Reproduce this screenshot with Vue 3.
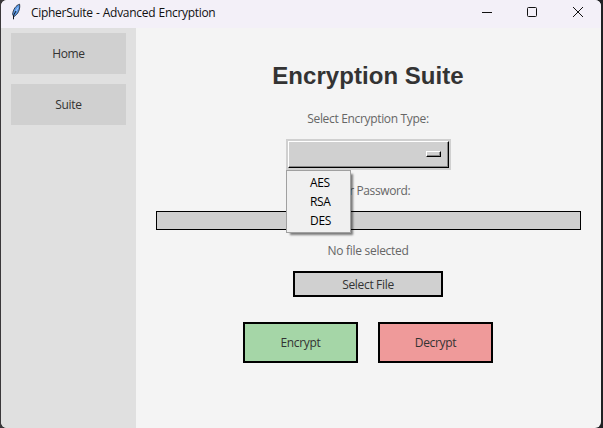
<script setup>
const pages = ['Home', 'Suite']
const ciphers = ['AES', 'RSA', 'DES']
</script>

<template>
  <div class="desktop">
    <div class="window">
      <header class="titlebar">
        <svg class="feather" width="10" height="18" viewBox="0 0 10 18">
          <path d="M8.600 1.200C5 2.200 2 6.500 1.600 11.500L2.900 13.500C6.800 11.500 9.400 6.500 8.600 1.200Z" fill="#5c9be8" stroke="#26303f" stroke-width="0.9" />
          <path d="M7 4.500L4.500 9" fill="none" stroke="#b5d4fa" stroke-width="0.9" />
          <path d="M5 8L2.500 12.500V16.300" fill="none" stroke="#10151f" stroke-width="1" />
        </svg>
        <span class="caption">CipherSuite - Advanced Encryption</span>
        <svg class="controls" width="104" height="12" viewBox="0 0 104 12">
          <path d="M0 6.500H10" stroke="#111" fill="none" />
          <rect x="45.500" y="1.500" width="9" height="9" rx="1" stroke="#111" fill="none" />
          <path d="M91 1L101 11M101 1L91 11" stroke="#111" fill="none" />
        </svg>
      </header>
      <div class="body">
        <nav class="sidebar">
          <button v-for="p in pages" :key="p" class="nav">{{ p }}</button>
        </nav>
        <main class="main">
          <h1>Encryption Suite</h1>
          <div class="label type">Select Encryption Type:</div>
          <div class="option">
            <div class="raised"><i class="mark"></i></div>
            <div class="menu">
              <div v-for="c in ciphers" :key="c" class="item">{{ c }}</div>
            </div>
          </div>
          <div class="label pass">Enter Password:</div>
          <div class="entry"></div>
          <div class="label file">No file selected</div>
          <button class="pick">Select File</button>
          <div class="actions">
            <button class="act encrypt">Encrypt</button>
            <button class="act decrypt">Decrypt</button>
          </div>
        </main>
      </div>
    </div>
  </div>
</template>

<style>
body { margin: 0; }
</style>

<style scoped>
* { box-sizing: border-box; }
.desktop {
  width: 603px; height: 428px; padding: 0 2px 0 1px;
  background: linear-gradient(90deg, #3a383a 0 50%, #202124 50%);
  font-family: "Open Sans", "Noto Sans", sans-serif;
  font-size: 12px; letter-spacing: -0.33px; color: #333; overflow: hidden;
}
.window {
  width: 600px; height: 428px; border-radius: 6px; overflow: hidden;
  background: #f4f4f4; display: flex; flex-direction: column;
}
.titlebar {
  height: 28px; flex: none; display: flex; align-items: center;
  background: #f3f0f8; padding-left: 10px;
}
.feather { margin-top: -4px; }
.caption {
  margin-left: 10px; line-height: 16px; margin-top: -2px; color: #111;
  letter-spacing: -0.3px; word-spacing: 0.5px; white-space: nowrap;
}
.controls { margin-left: auto; margin-right: 15px; margin-top: -4px; }
.body { flex: 1; display: flex; }
.sidebar {
  width: 135px; background: #e0e0e0; padding: 5px 10px;
  display: flex; flex-direction: column; gap: 10px;
}
button { font: inherit; letter-spacing: inherit; color: #333; padding: 0; margin: 0; border: 0; }
.nav { height: 41px; background: #d0d0d0; }
.main { flex: 1; display: flex; flex-direction: column; align-items: center; padding-right: 1px; }
h1 {
  margin: 34px 0 0; font: bold 24px/28px "Liberation Sans", Arial, sans-serif;
  letter-spacing: 0.05px; color: #333; white-space: nowrap;
}
.label { line-height: 16px; color: #666; white-space: nowrap; }
.type { margin-top: 21px; }
.option {
  position: relative; width: 165px; height: 31px; margin-top: 12px; left: 0.5px;
  border: 2px solid #d0d0d0;
}
.raised {
  height: 27px; background: #d0d0d0; border: 1px solid; border-color: #fff #000 #000 #fff;
  box-shadow: inset -1px -1px #888; display: flex; align-items: center; justify-content: flex-end;
  padding: 0 7px 1px 0;
}
.mark {
  width: 15px; height: 6px; border: 1px solid; border-color: #fff #000 #000 #fff;
  box-shadow: inset -1px -1px #888;
}
.menu {
  position: absolute; left: -2px; top: 29px; width: 65px; height: 63px; z-index: 2;
  padding-top: 2px; background: #f0f0f0; border: 1px solid #a0a0a0;
  box-shadow: 3px 3px 2px -1px rgba(0, 0, 0, 0.5);
}
.item { height: 19px; line-height: 19px; padding-left: 23px; color: #000; }
.pass { margin-top: 13px; letter-spacing: -0.4px; }
.entry { width: 425px; height: 19px; margin-top: 12px; background: #d0d0d0; border: 1px solid #000; }
.file { margin-top: 13px; letter-spacing: -0.28px; }
.pick { width: 150px; height: 26px; margin-top: 12px; background: #d0d0d0; border: 2px solid #000; }
.actions { display: flex; gap: 20px; margin-top: 25px; }
.act { width: 115px; height: 41px; border: 2px solid #000; }
.encrypt { background: #a5d6a7; }
.decrypt { background: #ef9a9a; }
</style>
